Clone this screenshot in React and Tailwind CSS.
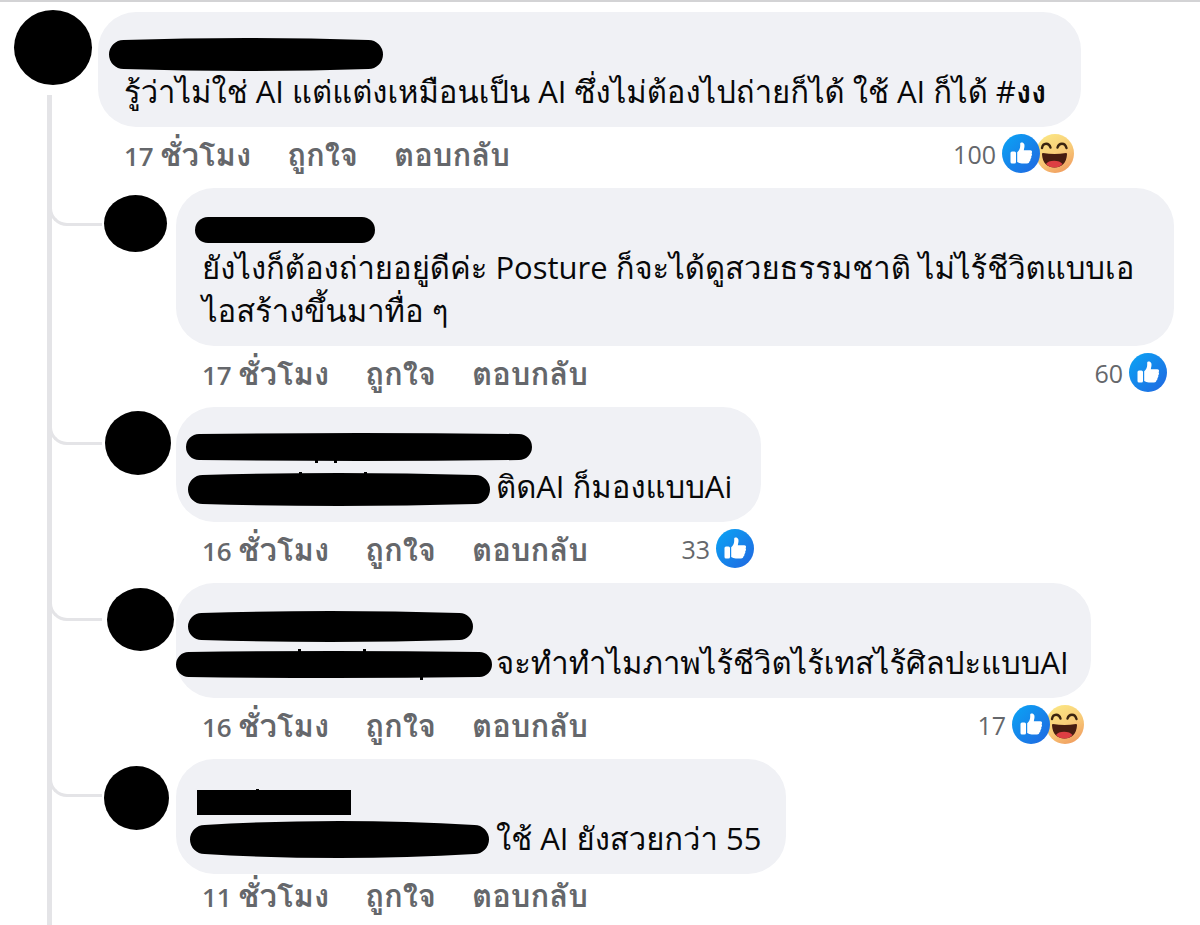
import { useId } from 'react';

const Icons = {
  Like: () => {
    const id = useId();
    return (
      <svg width="38" height="39" viewBox="0 0 38 39" preserveAspectRatio="none">
        <defs>
          <linearGradient id={id} x1="0" y1="0" x2="1" y2="1">
            <stop offset="0" stopColor="#0aa5f5" />
            <stop offset="1" stopColor="#2166e0" />
          </linearGradient>
        </defs>
        <ellipse cx="19" cy="19.5" rx="19" ry="19.5" fill={`url(#${id})`} />
        <rect x="8.5" y="17.5" width="5.5" height="12" rx="1.5" fill="#fff" />
        <path d="M15.200 18.200c1.800-1.600 3-3.600 3-6.200V9.600c0-1.600 3.600-1.600 4.200 1 .4 2-.3 4-.6 5.600h6.400c1.800 0 2.400 1.800 1.400 3 .7 1 .5 2.300-.4 3 .4 1 .1 2.100-.8 2.800.2 1-.1 2-1 2.500-.1 1.300-1 1.900-2.300 1.900h-5.300c-1.900 0-3.200-.5-4.600-1.300z" fill="#fff" />
      </svg>
    );
  },
  Haha: () => {
    const id = useId();
    return (
      <svg width="38" height="39" viewBox="0 0 38 39" preserveAspectRatio="none">
        <defs>
          <linearGradient id={id} x1="0.3" y1="0" x2="0.8" y2="1">
            <stop offset="0" stopColor="#fbe583" />
            <stop offset="0.5" stopColor="#f8cb78" />
            <stop offset="1" stopColor="#f09a5e" />
          </linearGradient>
        </defs>
        <ellipse cx="19" cy="19.5" rx="19" ry="19.5" fill={`url(#${id})`} />
        <path d="M6 14c1-5.500 7-5.500 8.500-.5M21.500 13.500c1.500-5 7.500-5 9 .5" fill="none" stroke="#3a2410" strokeWidth="2.400" strokeLinecap="round" />
        <path d="M7 19c8 1.200 15 1.200 23 0 .8 0 1 .6 1 1.500-.5 8-5 13-12.500 13S6.500 28.500 6 20.500c0-.9.200-1.500 1-1.500z" fill="#471c10" />
        <path d="M10 30c2-4.500 14-4.500 16.500 0-2 2.500-5 3.500-8 3.500s-6.500-1-8.500-3.500z" fill="#dd3e43" />
      </svg>
    );
  }
};

// Marker stroke that hides a name; `bulge` swells its long sides, `marks` are bits that stick out
function Redaction({ width, height, bulge = 0, square = false, marks = [], className }) {
  const r = square ? 0 : (height - 2 * bulge) / 2;
  const top = bulge;
  const bottom = height - bulge;
  const d = `M${r} ${top}Q${width / 2} ${-bulge} ${width - r} ${top}A${r} ${r} 0 0 1 ${width - r} ${bottom}Q${width / 2} ${height + bulge} ${r} ${bottom}A${r} ${r} 0 0 1 ${r} ${top}z`;
  return (
    <svg width={width} height={height} className={`absolute overflow-visible ${className}`} aria-hidden="true">
      <path d={d} />
      {marks.map(([x, y]) => <rect key={x} x={x} y={y} width="3" height="3" />)}
    </svg>
  );
}

const root = {
  name: { width: 274, height: 33, bulge: 2, className: '-left-[15px] top-[11px]' },
  text: 'รู้ว่าไม่ใช่ AI แต่แต่งเหมือนเป็น AI ซึ่งไม่ต้องไปถ่ายก็ได้ ใช้ AI ก็ได้ ',
  hashtag: 'งง',
  hours: 17,
  likes: 100,
  haha: true,
  size: 'w-[983px]'
};

const replies = [
  {
    avatar: 'ml-[6px] mt-[7px] w-[63px] h-[57px]',
    name: { width: 180, height: 26, className: '-left-[7px] top-[14px]' },
    text: <>ยังไงก็ต้องถ่ายอยู่ดีค่ะ Posture ก็จะได้ดูสวยธรรมชาติ ไม่ไร้ชีวิตแบบเอ<wbr />ไอสร้างขึ้นมาทื่อ ๆ</>,
    hours: 17,
    likes: 60,
    size: 'w-[998px]'
  },
  {
    avatar: 'ml-[7px] mt-[4px] w-[66px] h-[64px]',
    name: { width: 346, height: 28, bulge: 1, marks: [[129, 27], [148, 27]], className: '-left-[16px] top-[11px]' },
    tag: { width: 302, height: 33, bulge: 2, marks: [[111, -1], [176, -1]], className: '-left-[14px] top-[8px]' },
    text: 'ติดAI ก็มองแบบAi',
    hours: 16,
    likes: 33,
    size: 'w-[585px]'
  },
  {
    avatar: 'ml-[9px] mt-[5px] w-[67px] h-[63px]',
    name: { width: 285, height: 31, bulge: 2, className: '-left-[14px] top-[13px]' },
    tag: { width: 316, height: 27, bulge: 1, marks: [[122, -2], [187, -2], [244, 26]], className: '-left-[26px] top-[10px]' },
    text: 'จะทำทำไมภาพไร้ชีวิตไร้เทสไร้ศิลปะแบบAI',
    hours: 16,
    likes: 17,
    haha: true,
    size: 'w-[915px]'
  },
  {
    avatar: 'ml-[6px] mt-[7px] w-[65px] h-[64px]',
    name: { width: 154, height: 25, square: true, marks: [[59, -1]], className: '-left-[5px] top-[16px]' },
    tag: { width: 299, height: 37, bulge: 4, className: '-left-[12px] top-[4px]' },
    text: 'ใช้ AI ยังสวยกว่า 55',
    hours: 11,
    size: 'w-[610px]',
    last: true
  }
];

function Comment({ comment }) {
  return (
    <div className={`max-w-full ${comment.size}`}>
      <div className="bg-[#f0f1f5] rounded-[38px] pl-[26px] pr-[20px] pt-[15px] pb-[14px] text-[31px] leading-[43px] text-[#080809]">
        <div className="relative h-[43px]">
          <Redaction {...comment.name} />
        </div>
        <p>
          {comment.tag && (
            <span className="relative inline-block align-top w-[294px] h-[43px]">
              <Redaction {...comment.tag} />
            </span>
          )}
          {comment.text}
          {comment.hashtag && <a href="#tag">#<b className="font-semibold">{comment.hashtag}</b></a>}
        </p>
      </div>
      <div className={`flex items-center pb-[5px] pl-[26px] pr-[7px] text-[#65676b] ${comment.last ? 'h-[50px]' : 'h-[61px]'}`}>
        <div className="flex items-baseline gap-[36px] text-[31px] leading-[43px] font-semibold whitespace-nowrap">
          <a href="#comment" className="hover:underline"><span className="text-[26px]">{comment.hours} </span>ชั่วโมง</a>
          <button type="button" className="hover:underline">ถูกใจ</button>
          <button type="button" className="hover:underline">ตอบกลับ</button>
        </div>
        {comment.likes && (
          <button type="button" className="ml-auto flex items-center gap-[6px] text-[25px]">
            {comment.likes}
            <span className="flex pb-[4px]">
              <span className="relative z-10"><Icons.Like /></span>
              {comment.haha && <span className="-ml-1"><Icons.Haha /></span>}
            </span>
          </button>
        )}
      </div>
    </div>
  );
}

export default function App() {
  return (
    <main lang="th" className="min-h-screen bg-white border-t-2 border-[#d3d3d5] pt-[10px] flex font-['Open_Sans','Loma','Noto_Sans_Thai','Noto_Sans',sans-serif]">
      <div className="w-[98px] shrink-0 flex flex-col gap-[10px] pl-[14px]">
        <div className="w-[78px] h-[75px] -mt-[2px] shrink-0 rounded-[50%] bg-black" />
        <div className="w-[5px] ml-[33px] flex-1 bg-[#e4e4e7]" />
      </div>

      <div className="flex-1 min-w-0 pr-[26px]">
        <Comment comment={root} />

        <ul>
          {replies.map((reply, idx) => (
            <li key={idx} className="relative flex">
              <div className="absolute -left-[49px] top-0 w-[53px] h-[38px] border-l-3 border-b-3 border-[#e4e4e7] rounded-bl-[18px]" />
              <div className="w-[78px] shrink-0">
                <div className={`rounded-[50%] bg-black ${reply.avatar}`} />
              </div>
              <Comment comment={reply} />
            </li>
          ))}
        </ul>
      </div>
    </main>
  );
}
